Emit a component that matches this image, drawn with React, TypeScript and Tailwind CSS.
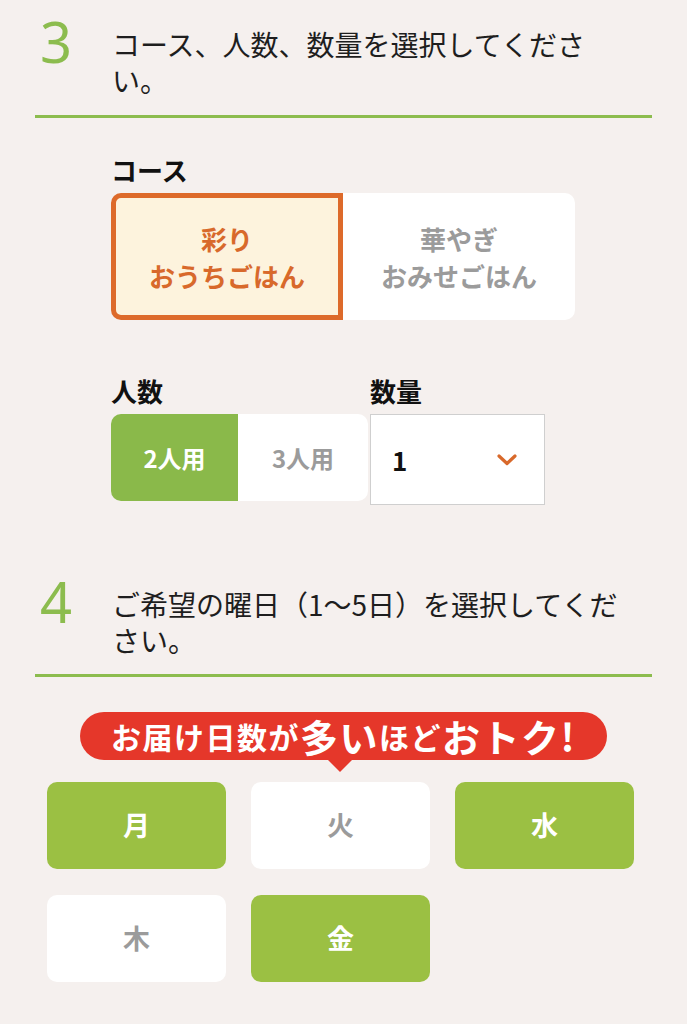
import React from "react";

const GREEN_LINE = "bg-[#8cbc4e]";

function SectionHeader({ num, line1, line2 }: { num: string; line1: string; line2: string }) {
  return (
    <div className="flex items-start pl-[40px]">
      <div className="w-[72px] text-[56px] leading-[56px] font-normal text-[#8cbc4e]" style={{ fontFamily: '"Noto Sans", sans-serif' }}>
        {num}
      </div>
      <div className="mt-[13px] text-[28px] leading-[36px] text-[#1e1e1e] whitespace-nowrap">
        <div>{line1}</div>
        <div>{line2}</div>
      </div>
    </div>
  );
}

export default function App() {
  const days = [
    { d: "月", on: true },
    { d: "火", on: false },
    { d: "水", on: true },
    { d: "木", on: false },
    { d: "金", on: true },
  ];
  return (
    <div
      className="w-full min-h-screen bg-[#f5f0ee] pt-[13px] pb-[40px]"
      style={{ fontFamily: '"Noto Sans CJK JP", "Noto Sans", sans-serif' }}
    >
      <SectionHeader num="3" line1="コース、人数、数量を選択してくださ" line2="い。" />
      <div className={`mx-[35px] h-[3px] mt-[17px] ${GREEN_LINE}`} />

      <div className="ml-[111px]">
        <div className="mt-[37px] text-[26px] leading-[30px] font-bold text-[#111]">コース</div>
        <div className="mt-[8px] flex w-[464px] h-[127px]">
          <div className="w-[232px] h-full border-[5px] border-[#dd6a2a] bg-[#fdf3dd] rounded-l-[10px] flex flex-col items-center justify-center text-[26px] leading-[37px] font-bold text-[#d8692b]">
            <span>彩り</span>
            <span>おうちごはん</span>
          </div>
          <div className="flex-1 h-full bg-white rounded-r-[10px] flex flex-col items-center justify-center text-[26px] leading-[37px] font-bold text-[#9b9b9b]">
            <span>華やぎ</span>
            <span>おみせごはん</span>
          </div>
        </div>

        <div className="mt-[56px] flex items-start">
          <div className="w-[257px]">
            <div className="text-[26px] leading-[30px] font-bold text-[#111]">人数</div>
            <div className="mt-[8px] flex h-[87px] rounded-[10px] overflow-hidden">
              <div className="w-[127px] bg-[#8ab94a] flex items-center justify-center text-[24px] font-bold text-white">
                2人用
              </div>
              <div className="flex-1 bg-white flex items-center justify-center text-[24px] font-bold text-[#9b9b9b]">
                3人用
              </div>
            </div>
          </div>
          <div className="ml-[2px] w-[175px]">
            <div className="text-[26px] leading-[30px] font-bold text-[#111]">数量</div>
            <div className="mt-[8px] h-[91px] bg-white border border-[#cfcfcf] flex items-center justify-between pl-[21px] pr-[27px]">
              <span className="text-[26px] font-bold text-[#111]">1</span>
              <svg width="20" height="12" viewBox="0 0 20 12" fill="none">
                <polyline points="2,2 10,9.5 18,2" stroke="#d8692b" strokeWidth="3.2" strokeLinecap="round" strokeLinejoin="round" />
              </svg>
            </div>
          </div>
        </div>
      </div>

      <div className="mt-[68px]">
        <SectionHeader num="4" line1="ご希望の曜日（1〜5日）を選択してくだ" line2="さい。" />
      </div>
      <div className={`mx-[35px] h-[3px] mt-[16px] ${GREEN_LINE}`} />

      <div className="mt-[35px] flex flex-col items-center">
        <div className="w-[527px] h-[48px] rounded-full bg-[#e5372a] flex items-center justify-center text-white font-bold tracking-[1.5px]">
          <span className="text-[30px] leading-none">お届け日数が</span>
          <span className="text-[38px] leading-none">多い</span>
          <span className="text-[30px] leading-none">ほど</span>
          <span className="text-[38px] leading-none">おトク!</span>
        </div>
        <div className="w-0 h-0 -ml-[7px] border-l-[12px] border-r-[12px] border-t-[12px] border-l-transparent border-r-transparent border-t-[#e5372a]" />
      </div>

      <div className="ml-[47px] mt-[10px] w-[587px] grid grid-cols-3 gap-x-[25px] gap-y-[26px]">
        {days.map((x) => (
          <div
            key={x.d}
            className={`h-[87px] rounded-[10px] flex items-center justify-center text-[27px] font-bold ${
              x.on ? "bg-[#9bc043] text-white" : "bg-white text-[#9b9b9b]"
            }`}
          >
            {x.d}
          </div>
        ))}
      </div>
    </div>
  );
}
